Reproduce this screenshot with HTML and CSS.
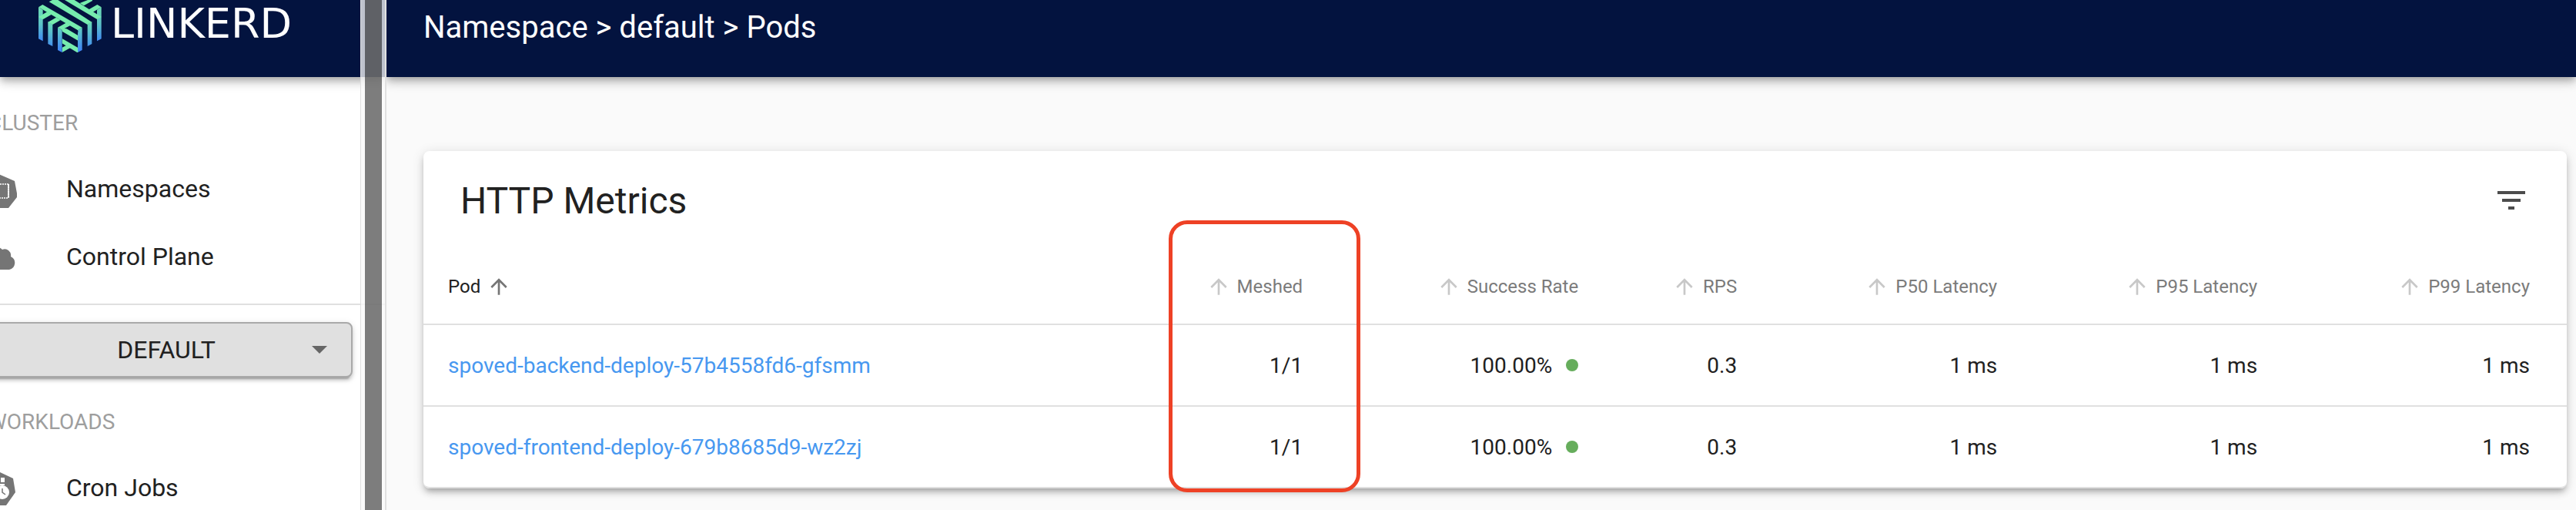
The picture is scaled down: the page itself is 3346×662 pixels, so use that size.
FILE: index.html
```html
<!DOCTYPE html>
<html lang="en">
<head>
<meta charset="utf-8">
<title>Linkerd - Pods</title>
<link rel="stylesheet" href="styles.css">
</head>
<body>
<svg class="defs" aria-hidden="true">
  <symbol id="arrow-up" viewBox="0 0 24 24"><path d="M4 12l1.410 1.410L11 7.830V20h2V7.830l5.580 5.590L20 12l-8-8-8 8z"/></symbol>
</svg>
<aside class="sidebar">
  <div class="bar brand">
    <svg class="logo" viewBox="30 0 246 204" aria-hidden="true">
      <defs>
        <linearGradient id="fade" gradientUnits="userSpaceOnUse" x1="0" y1="60" x2="0" y2="204">
          <stop offset="0" stop-color="#76ecae"/><stop offset="0.35" stop-color="#5fcbc2"/><stop offset="0.85" stop-color="#4590ee"/><stop offset="1" stop-color="#3f83fb"/>
        </linearGradient>
        <linearGradient id="fade-side" gradientUnits="userSpaceOnUse" x1="0" y1="24" x2="0" y2="162">
          <stop offset="0" stop-color="#6fe0b4"/><stop offset="0.5" stop-color="#5cc3c6"/><stop offset="1" stop-color="#4088f6"/>
        </linearGradient>
        <clipPath id="inner"><path d="M122 100H184V204H122z"/></clipPath>
      </defs>
      <g fill="url(#fade-side)">
        <path d="M30 28l17 10v122l-17-9z"/>
        <path d="M275 28l-17 10v122l17-9z"/>
      </g>
      <g fill="url(#fade)">
        <path d="M67 85l18 10v85l-18-9z"/><path d="M238 85l-17 10v85l17-9z"/>
        <path d="M105 107l17 10v87l-17-9z"/><path d="M200 107l-17 10v87l17-9z"/>
      </g>
      <g fill="#76ecae">
        <path d="M30 28l16-10 154 89-17 11z"/>
        <path d="M71 7L84 0h22l132 86-17 10z"/>
        <path d="M132 0h38l105 66-17 9z"/>
        <path d="M30 66l34-20 17 10-34 20z"/>
        <path d="M67 86l32-18 17 10-31 18z"/>
        <path d="M105 107l36-20 17 10-36 20z"/>
        <path d="M259 18l16 10-38 22-16-10z"/>
        <path d="M222 0h18v3l-33 19-16-10z"/>
      </g>
      <g fill="#76ecae" clip-path="url(#inner)">
        <path d="M122 101l62 37v20l-62-36z"/><path d="M122 150l62 36v18h-4l-58-35z"/><path d="M122 185l23-12 16 9-39 22z"/>
      </g>
      <path fill="#03133f" d="M131 111l22-10 31 18v8l-24-14z"/>
    </svg>
    <span class="wordmark">LINKERD</span>
  </div>
  <nav class="menu">
    <h2 class="section first">CLUSTER</h2>
    <a class="item" href="#"><svg class="item-icon" viewBox="0 0 48 48" aria-hidden="true">
      <path fill="#757575" d="M20 5l21 9 3 16v5L33 49H7L0 35V14z"/>
      <path fill="none" stroke="#fff" stroke-width="1.500" stroke-dasharray="2 1" d="M10 18h23v18H10"/>
      <path fill="none" stroke="#fff" stroke-width="2" stroke-dasharray="2 1" d="M33 18v18"/></svg>Namespaces</a>
    <a class="item" href="#"><svg class="item-icon" viewBox="0 0 48 48" aria-hidden="true">
      <path fill="#757575" d="M10 41a9 9 0 0 1-2-17 10 10 0 0 1 17-9 8 8 0 0 1 11 9 9 9 0 0 1-2 17z"/></svg>Control Plane</a>
    <hr class="rule">
    <select class="namespace" aria-label="Namespace"><option>DEFAULT</option></select>
    <h2 class="section">WORKLOADS</h2>
    <a class="item" href="#"><svg class="item-icon" viewBox="0 0 48 48" aria-hidden="true">
      <path fill="#757575" d="M20 3l19 9 3 18-12 17H10L0 30l3-18z"/>
      <path fill="#fff" d="M23 11h5v6h-5zM22 19h6v2h-6z"/><circle cx="25" cy="30" r="9" fill="#fff"/>
      <path fill="none" stroke="#757575" stroke-width="1.500" d="M25 25v5l4 3"/></svg>Cron Jobs</a>
  </nav>
  <div class="track"><div class="thumb"></div></div>
</aside>
<main class="main">
  <header class="bar crumbs">Namespace &gt; default &gt; Pods</header>
  <section class="card">
    <div class="toolbar">
      <h1 class="title">HTTP Metrics</h1>
      <button class="filter" type="button" aria-label="Filter"><svg viewBox="0 0 24 24" aria-hidden="true"><path d="M10 18h4v-2h-4v2zM3 6v2h18V6H3zm3 7h12v-2H6v2z"/></svg></button>
    </div>
    <table class="metrics">
      <colgroup><col class="c-pod"><col class="c-mesh"><col class="c-rate"><col class="c-rps"><col class="c-lat"><col class="c-lat"><col></colgroup>
      <thead><tr>
        <th class="active"><button class="sort" type="button">Pod<svg class="arrow"><use href="#arrow-up"/></svg></button></th>
        <th><button class="sort" type="button"><svg class="arrow"><use href="#arrow-up"/></svg>Meshed</button></th>
        <th><button class="sort" type="button"><svg class="arrow"><use href="#arrow-up"/></svg>Success Rate</button></th>
        <th><button class="sort" type="button"><svg class="arrow"><use href="#arrow-up"/></svg>RPS</button></th>
        <th><button class="sort" type="button"><svg class="arrow"><use href="#arrow-up"/></svg>P50 Latency</button></th>
        <th><button class="sort" type="button"><svg class="arrow"><use href="#arrow-up"/></svg>P95 Latency</button></th>
        <th><button class="sort" type="button"><svg class="arrow"><use href="#arrow-up"/></svg>P99 Latency</button></th>
      </tr></thead>
      <tbody>
        <tr><td><a href="#">spoved-backend-deploy-57b4558fd6-gfsmm</a></td><td>1/1</td><td><span class="rate">100.00%<i class="dot"></i></span></td><td>0.3</td><td>1 ms</td><td>1 ms</td><td>1 ms</td></tr>
        <tr><td><a href="#">spoved-frontend-deploy-679b8685d9-wz2zj</a></td><td>1/1</td><td><span class="rate">100.00%<i class="dot"></i></span></td><td>0.3</td><td>1 ms</td><td>1 ms</td><td>1 ms</td></tr>
      </tbody>
    </table>
    <div class="highlight"></div>
  </section>
</main>
</body>
</html>
```
FILE: styles.css
```css
* { box-sizing: border-box; }
body {
  margin: 0;
  display: flex;
  height: 100vh;
  overflow: hidden;
  background: #fafafa;
  color: #212121;
  font-family: Roboto, "Liberation Sans", sans-serif;
  font-size: 28px;
}
.defs { position: absolute; width: 0; height: 0; }
h1, h2 { margin: 0; font-weight: 400; }
a { color: #4798f0; text-decoration: none; }
button { border: 0; padding: 0; background: none; font: inherit; color: inherit; }

.bar {
  display: flex;
  height: 100px;
  background: #03133f;
  color: #fff;
  box-shadow: 0 4px 8px -2px rgba(0, 0, 0, .2), 0 8px 10px rgba(0, 0, 0, .14), 0 2px 20px rgba(0, 0, 0, .12);
}

.sidebar {
  position: relative;
  flex: none;
  width: 502px;
  overflow: hidden;
  background: #fff;
  border-right: 2px solid #e0e0e0;
}
.brand { align-items: flex-start; gap: 12px; padding-left: 50px; }
.logo { width: 82px; height: 68px; }
.wordmark { font-family: "DejaVu Sans", sans-serif; font-size: 54px; line-height: 62px; }
.menu { margin-left: -54px; }
.section { padding-left: 38px; font-size: 28px; line-height: 83px; color: #9e9e9e; }
.section.first { margin-top: 18px; }
.item {
  display: flex;
  align-items: center;
  gap: 60px;
  height: 88px;
  padding-left: 32px;
  font-size: 32px;
  color: #212121;
}
.item-icon { width: 48px; height: 48px; overflow: visible; }
.rule { margin: 17px 0 22px; border: 0; border-top: 2px solid #e0e0e0; }
.namespace {
  display: block;
  appearance: none;
  width: 484px;
  height: 72px;
  margin: 0 0 16px 28px;
  border: 2px solid #a9a9a9;
  border-radius: 8px;
  background: #e0e0e0 url("data:image/svg+xml,%3Csvg xmlns='http://www.w3.org/2000/svg' viewBox='0 0 20 10'%3E%3Cpath fill='%23666' d='M0 0h20L10 10z'/%3E%3C/svg%3E") no-repeat right 31px center / 20px 10px;
  box-shadow: 0 6px 2px -4px rgba(0, 0, 0, .2), 0 4px 4px rgba(0, 0, 0, .14), 0 2px 10px rgba(0, 0, 0, .12);
  color: #212121;
  font: 400 32px Roboto, sans-serif;
  text-align: center;
  text-align-last: center;
}
.track {
  position: absolute;
  top: 0;
  right: 0;
  bottom: 0;
  width: 32px;
  padding: 0 4px 0 5px;
  border-left: 1px solid #e0e0e0;
  background: rgba(250, 250, 250, .76);
}
.thumb { height: 100%; background: rgba(0, 0, 0, .5); }

.main { flex: 1; min-width: 0; }
.crumbs { padding: 0 48px; font-size: 40px; line-height: 72px; }
.card {
  position: relative;
  margin: 96px 12px 0 48px;
  border-radius: 8px;
  background: #fff;
  box-shadow: 0 6px 6px -4px rgba(0, 0, 0, .2), 0 6px 8px rgba(0, 0, 0, .14), 0 2px 16px rgba(0, 0, 0, .12);
}
.toolbar {
  display: flex;
  align-items: center;
  justify-content: space-between;
  height: 128px;
  padding: 0 48px;
}
.title { font-size: 48px; }
.filter { width: 48px; height: 48px; fill: #4c4c4c; }
.filter svg { display: block; }

.metrics { width: 100%; table-layout: fixed; border-collapse: separate; border-spacing: 0; }
.c-pod { width: 34.27%; }
.c-mesh { width: 8.48%; }
.c-rate { width: 12.86%; }
.c-rps { width: 7.4%; }
.c-lat { width: 12.14%; }
.metrics th, .metrics td {
  height: 106px;
  padding: 0 48px 0 0;
  border-bottom: 2px solid #e0e0e0;
  text-align: right;
  white-space: nowrap;
}
.metrics th { height: 98px; font-size: 24px; font-weight: 400; color: #7b7b7b; }
.metrics th:first-child, .metrics td:first-child { padding-left: 32px; text-align: left; }
.metrics th.active { color: #212121; }
.metrics tbody tr:last-child td:first-child { border-bottom-left-radius: 8px; }
.metrics tbody tr:last-child td:last-child { border-bottom-right-radius: 8px; }
.sort { display: inline-flex; align-items: center; gap: 8px; vertical-align: middle; }
.arrow { width: 32px; height: 32px; fill: #c8c8c8; }
.active .arrow { fill: #757575; }
.rate { display: inline-flex; align-items: center; gap: 18px; }
.dot { width: 16px; height: 16px; border-radius: 50%; background: #66ad5c; }

.highlight {
  position: absolute;
  top: 90px;
  bottom: -5px;
  left: 34.77%;
  width: 8.94%;
  border: 5px solid #ee4125;
  border-radius: 24px;
  pointer-events: none;
}
```
